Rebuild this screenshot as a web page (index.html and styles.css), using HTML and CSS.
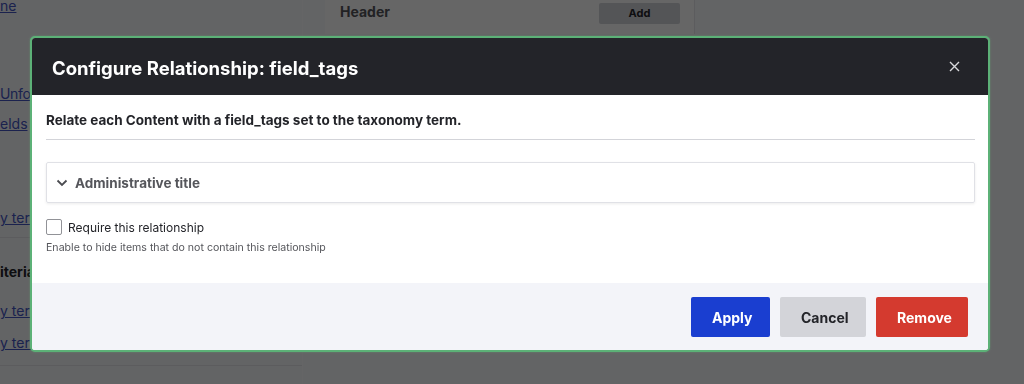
FILE: index.html
```html
<!doctype html>
<html lang="en">
<head>
    <meta charset="UTF-8">
    <meta name="viewport" content="width=device-width, initial-scale=1.0">
    <title>Configure Relationship</title>
    <link rel="stylesheet" href="styles.css">
</head>
<body>
    <div class="page">
        <aside class="sidebar">
            <a class="side-link first" href="#">ne</a>
            <a class="side-link unformatted" href="#">Unformatted list</a>
            <a class="side-link fields" href="#">elds</a>
            <div class="side-group">
                <a class="side-link term" href="#">y term</a>
            </div>
            <div class="side-group">
                <div class="side-title">iteria</div>
                <a class="side-link term-2" href="#">y term</a>
                <a class="side-link term-3" href="#">y term</a>
            </div>
        </aside>
        <main class="main">
            <div class="header-card">
                <span class="header-label">Header</span>
                <span class="header-add">Add</span>
            </div>
        </main>
    </div>

    <div class="overlay">
        <div class="dialog" role="dialog">
            <div class="dialog-titlebar">
                <h1 class="dialog-title">Configure Relationship: field_tags</h1>
                <button class="dialog-close" type="button" aria-label="Close">
                    <svg width="11" height="11" viewBox="0 0 11 11">
                        <path d="M1 1L10 10M10 1L1 10" stroke="#d8d9dc" stroke-width="1.4" fill="none"/>
                    </svg>
                </button>
            </div>
            <div class="dialog-body">
                <p class="dialog-desc">Relate each Content with a field_tags set to the taxonomy term.</p>
                <details class="admin-details">
                    <summary>
                        <svg class="chevron" width="12" height="8" viewBox="0 0 12 8">
                            <path d="M1.5 1.5L6 6L10.5 1.5" stroke="#4a4b50" stroke-width="1.8" fill="none"/>
                        </svg>
                        Administrative title
                    </summary>
                </details>
                <div class="form-item">
                    <label class="check-label">
                        <input type="checkbox" class="check">
                        <span>Require this relationship</span>
                    </label>
                    <div class="help">Enable to hide items that do not contain this relationship</div>
                </div>
            </div>
            <div class="dialog-buttons">
                <button class="btn btn-primary" type="button">Apply</button>
                <button class="btn btn-cancel" type="button">Cancel</button>
                <button class="btn btn-danger" type="button">Remove</button>
            </div>
        </div>
    </div>
</body>
</html>
```

FILE: styles.css
```css
body {
    margin: 0;
    padding: 0;
    font-family: Inter, "Liberation Sans", Arial, sans-serif;
    background-color: #f8f9fc;
    color: #232429;
    height: 384px;
    overflow: hidden;
}

.page {
    display: flex;
    height: 384px;
}

.sidebar {
    width: 302px;
    border-right: 1px solid #fdfdfe;
    overflow: hidden;
    font-size: 14px;
    line-height: 20px;
}

.side-link {
    display: block;
    color: #4456c4;
    text-decoration: underline;
    white-space: nowrap;
}

.side-link.first {
    margin-top: -4px;
}

.side-link.unformatted {
    margin-top: 68px;
    letter-spacing: -0.3px;
}

.side-link.fields {
    margin-top: 10px;
}

.side-group {
    border-bottom: 1px solid #e6e7ec;
}

.side-link.term {
    margin-top: 74px;
    margin-bottom: 9px;
}

.side-title {
    margin-top: 24px;
    font-weight: 700;
    color: #232429;
}

.side-link.term-2 {
    margin-top: 19px;
}

.side-link.term-3 {
    margin-top: 12px;
    margin-bottom: 12px;
}

.main {
    flex: 1;
    padding-left: 22px;
}

.header-card {
    width: 370px;
    height: 34px;
    background: #ffffff;
    border-right: 1px solid #e6e7ec;
    display: flex;
    align-items: flex-start;
    justify-content: space-between;
    box-sizing: border-box;
    padding: 3px 14px 0 15px;
}

.header-label {
    font-size: 14px;
    font-weight: 700;
    color: #55565b;
}

.header-add {
    width: 81px;
    height: 21px;
    line-height: 21px;
    text-align: center;
    font-size: 11px;
    font-weight: 700;
    color: #232429;
    background: #d3d4d9;
    border-radius: 2px;
}

.overlay {
    position: fixed;
    inset: 0;
    background: rgba(0, 0, 0, 0.6);
    display: flex;
    justify-content: center;
    align-items: flex-start;
    padding-top: 36px;
    padding-right: 4px;
}

.dialog {
    width: 960px;
    box-sizing: border-box;
    border: 2px solid #5cb177;
    border-radius: 5px;
    overflow: hidden;
    background: #ffffff;
    box-shadow: 0 0 2px rgba(92, 177, 119, 0.6);
}

.dialog-titlebar {
    height: 57px;
    background: #232429;
    display: flex;
    align-items: center;
    justify-content: space-between;
    padding: 0 28px 0 20px;
}

.dialog-title {
    margin: 0;
    font-size: 18.5px;
    font-weight: 700;
    color: #ffffff;
    padding-top: 2px;
}

.dialog-close {
    background: none;
    border: none;
    padding: 0;
    width: 11px;
    height: 11px;
    display: flex;
    cursor: pointer;
}

.dialog-body {
    padding: 15px 13px 28px 14px;
}

.dialog-desc {
    margin: 0;
    padding-bottom: 9px;
    border-bottom: 1px solid #d3d4d9;
    font-size: 13.5px;
    line-height: 20px;
    font-weight: 700;
    color: #232429;
}

.admin-details {
    margin-top: 22px;
    border: 1px solid #e0e1e6;
    border-radius: 2px;
    box-shadow: 0 1px 3px rgba(0, 0, 0, 0.08);
}

.admin-details summary {
    list-style: none;
    height: 39px;
    display: flex;
    align-items: center;
    gap: 7px;
    padding-left: 9px;
    font-size: 13.5px;
    font-weight: 700;
    color: #55565b;
    cursor: pointer;
}

.admin-details summary::-webkit-details-marker {
    display: none;
}

.form-item {
    margin-top: 16px;
}

.check-label {
    display: flex;
    align-items: center;
    gap: 6px;
    font-size: 12px;
    color: #232429;
}

.check {
    appearance: none;
    -webkit-appearance: none;
    margin: 0;
    width: 16px;
    height: 16px;
    border: 1px solid #919297;
    border-radius: 2px;
    background: #ffffff;
}

.help {
    margin-top: 6px;
    font-size: 10.6px;
    line-height: 14px;
    color: #55565b;
}

.dialog-buttons {
    background: #f3f4f9;
    display: flex;
    justify-content: flex-end;
    gap: 10px;
    padding: 14px 20px 13px;
}

.btn {
    height: 40px;
    border: none;
    border-radius: 2px;
    padding: 0 21px;
    font-family: inherit;
    font-size: 14px;
    font-weight: 700;
    cursor: pointer;
}

.btn-primary {
    background: #1a3ed0;
    color: #ffffff;
    width: 79px;
}

.btn-cancel {
    background: #d3d4d9;
    color: #232429;
    width: 86px;
}

.btn-danger {
    background: #d43a2f;
    color: #ffffff;
    width: 92px;
}
```
